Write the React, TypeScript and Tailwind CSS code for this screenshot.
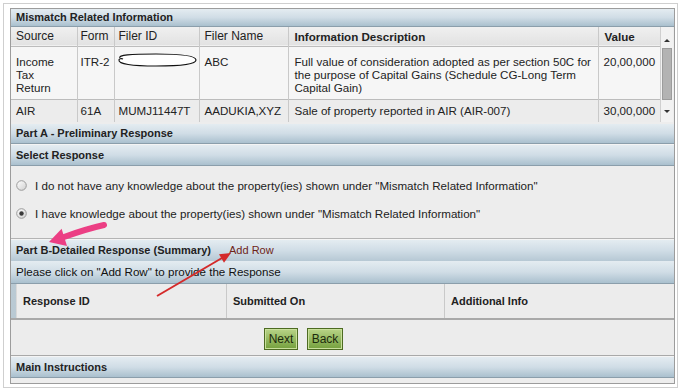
import React from "react";

const band =
  "bg-gradient-to-b from-[#e4ecf1] via-[#d0dde6] to-[#aac0ce] border-b border-[#8b9eab]";

const Radio = ({ checked }: { checked?: boolean }) => (
  <svg width="11" height="11" viewBox="0 0 11 11" className="shrink-0">
    <defs>
      <linearGradient id={checked ? "rg1" : "rg0"} x1="0" y1="0" x2="1" y2="1">
        <stop offset="0" stopColor="#ffffff" />
        <stop offset="1" stopColor="#cfcfcf" />
      </linearGradient>
    </defs>
    <circle cx="5.5" cy="5.5" r="4.8" fill={`url(#${checked ? "rg1" : "rg0"})`} stroke="#9a9a9a" strokeWidth="1" />
    {checked && <circle cx="5.5" cy="5.5" r="2.2" fill="#3a3a3a" />}
  </svg>
);

const Btn = ({ label, w }: { label: string; w: string }) => (
  <button
    className={`${w} h-[22px] border border-[#4d6b22] bg-gradient-to-b from-[#b9d487] to-[#74a03c] text-[12px] text-[#1c2a0c] leading-none shadow-[inset_0_0_0_1px_#c9e09c]`}
  >
    {label}
  </button>
);

export default function App() {
  return (
    <div className="relative w-[681px] h-[391px] bg-white p-[3px] font-['Liberation_Sans',Arial,sans-serif] text-[#222]">
      <div className="h-full border border-[#cfcfcf] pl-[6px] pr-[2px] pt-[4px] pb-[3px]">
        <div className="h-full border border-[#9c9c9c] bg-[#ededed] flex flex-col">
          {/* Mismatch header */}
          <div className={`h-[18px] shrink-0 flex items-center pl-[5px] text-[11px] font-bold ${band}`}>
            Mismatch Related Information
          </div>

          {/* Mismatch table */}
          <div className="h-[95px] shrink-0 flex">
            <table className="table-fixed w-[649px] border-collapse text-[11.6px] leading-[13px]">
              <colgroup>
                <col className="w-[66px]" />
                <col className="w-[37px]" />
                <col className="w-[85px]" />
                <col className="w-[89px]" />
                <col className="w-[310px]" />
                <col className="w-[62px]" />
              </colgroup>
              <thead>
                <tr className="h-[19px] bg-gradient-to-b from-[#f0f0f0] to-[#e2e2e2] border-b border-[#bcbcbc] text-left text-[12px]">
                  <th className="font-normal px-[5px] border-r border-[#c9c9c9]">Source</th>
                  <th className="font-normal px-[3px] border-r border-[#c9c9c9]">Form</th>
                  <th className="font-normal px-[4px] border-r border-[#c9c9c9]">Filer ID</th>
                  <th className="font-normal px-[5px] border-r border-[#c9c9c9]">Filer Name</th>
                  <th className="font-bold text-[11.6px] px-[6px] border-r border-[#c9c9c9]">Information Description</th>
                  <th className="font-bold text-[11.6px] px-[6px]">Value</th>
                </tr>
              </thead>
              <tbody>
                <tr className="h-[53px] bg-[#f6f6f6] border-b border-[#bcbcbc] align-top">
                  <td className="px-[5px] pt-[8px] border-r border-[#c9c9c9]">Income Tax Return</td>
                  <td className="px-[3px] pt-[8px] border-r border-[#c9c9c9]">ITR-2</td>
                  <td className="pl-[1px] pt-[6px] border-r border-[#c9c9c9]">
                    <svg width="82" height="14" viewBox="0 0 82 14" className="block">
                      <path
                        d="M4 5 C 2 2, 14 1, 40 1 C 66 1, 80 3, 80 7 C 80 11, 66 13, 40 13 C 16 13, 2 11, 3 7 C 3 6, 5 5, 7 6"
                        fill="#ffffff"
                        stroke="#111"
                        strokeWidth="1.2"
                      />
                    </svg>
                  </td>
                  <td className="px-[5px] pt-[8px] border-r border-[#c9c9c9]">ABC</td>
                  <td className="pl-[6px] pr-[2px] pt-[8px] border-r border-[#c9c9c9]">
                    Full value of consideration adopted as per section 50C for the purpose of Capital Gains (Schedule CG-Long Term Capital Gain)
                  </td>
                  <td className="px-[5px] pt-[8px]">20,00,000</td>
                </tr>
                <tr className="h-[23px] bg-[#ececec]">
                  <td className="px-[5px] border-r border-[#c9c9c9]">AIR</td>
                  <td className="px-[3px] border-r border-[#c9c9c9]">61A</td>
                  <td className="px-[4px] border-r border-[#c9c9c9]">MUMJ11447T</td>
                  <td className="px-[5px] border-r border-[#c9c9c9]">AADUKIA,XYZ</td>
                  <td className="px-[6px] border-r border-[#c9c9c9]">Sale of property reported in AIR (AIR-007)</td>
                  <td className="px-[5px]">30,00,000</td>
                </tr>
              </tbody>
            </table>
            {/* scrollbar */}
            <div className="w-[13px] border-l border-[#cfcfcf] bg-[#f2f2f2] flex flex-col items-center">
              <div className="h-[21px] flex items-end justify-center pb-[6px]">
                <div className="w-0 h-0 border-l-[3px] border-r-[3px] border-b-[3px] border-l-transparent border-r-transparent border-b-[#333]" />
              </div>
              <div className="w-[10px] h-[52px] bg-[#b3b3b3] border border-[#9c9c9c]" />
              <div className="flex-1 flex items-center justify-center">
                <div className="w-0 h-0 border-l-[3px] border-r-[3px] border-t-[3px] border-l-transparent border-r-transparent border-t-[#333]" />
              </div>
            </div>
          </div>

          <div className="h-[2px] shrink-0" />

          {/* Part A */}
          <div className={`h-[20px] shrink-0 flex items-center pl-[5px] text-[11px] font-bold ${band}`}>
            Part A - Preliminary Response
          </div>
          <div className="h-[1px] shrink-0 bg-[#f4f4f4]" />
          <div className={`h-[21px] shrink-0 flex items-center pl-[5px] text-[11px] font-bold ${band}`}>
            Select Response
          </div>

          {/* Radios */}
          <div className="h-[72px] shrink-0 flex flex-col pl-[5px] pt-[13px] gap-[15px] text-[11.6px] leading-[13px]">
            <label className="flex items-center gap-[8px]">
              <Radio />
              <span>I do not have any knowledge about the property(ies) shown under "Mismatch Related Information"</span>
            </label>
            <label className="flex items-center gap-[8px]">
              <Radio checked />
              <span>I have knowledge about the property(ies) shown under "Mismatch Related Information"</span>
            </label>
          </div>

          <div className="h-[2px] shrink-0 border-t border-[#b4b4b4] bg-[#f4f4f4]" />

          {/* Part B */}
          <div className="h-[21px] shrink-0 flex items-center pl-[5px] bg-gradient-to-b from-[#e4ecf1] via-[#d0dde6] to-[#b6c8d4]">
            <span className="text-[11px] font-bold">Part B-Detailed Response (Summary)</span>
            <span className="ml-[18px] text-[11px] text-[#6e2418]">Add Row</span>
          </div>
          <div className={`h-[23px] shrink-0 flex items-center pl-[5px] text-[11.6px] text-[#111] ${band}`}>
            Please click on "Add Row" to provide the Response
          </div>

          {/* Response table */}
          <div className="h-[36px] shrink-0 flex bg-gradient-to-r from-[#b9c9d3] to-[#ececec] border-b-2 border-[#a9a9a9]">
            <div className="ml-[5px] flex-1 flex bg-[#ececec] border-l border-[#d9d9d9] text-[11px] font-bold">
              <div className="w-[210px] flex items-center pl-[6px] border-r border-[#c9c9c9]">Response ID</div>
              <div className="w-[218px] flex items-center pl-[6px] border-r border-[#c9c9c9]">Submitted On</div>
              <div className="flex-1 flex items-center pl-[6px]">Additional Info</div>
            </div>
          </div>

          {/* Buttons */}
          <div className="h-[35px] shrink-0 flex items-start pt-[8px] pl-[253px] gap-[9px] bg-[#ececec]">
            <Btn label="Next" w="w-[34px]" />
            <Btn label="Back" w="w-[36px]" />
          </div>

          <div className="h-[2px] shrink-0 border-t border-[#a9a9a9] bg-[#f4f4f4]" />

          {/* Main Instructions */}
          <div className={`h-[21px] shrink-0 flex items-center pl-[5px] text-[11px] font-bold ${band}`}>
            Main Instructions
          </div>
          <div className="flex-1 bg-[#ededed]" />
        </div>
      </div>

      {/* annotation arrows */}
      <svg className="absolute inset-0 pointer-events-none" width="681" height="391" viewBox="0 0 681 391">
        <path d="M104 225 Q 86 229 64 237" stroke="#ec3f84" strokeWidth="6" strokeLinecap="round" fill="none" />
        <polygon points="49,242 67,246 61.6,228.7" fill="#ec3f84" />
        <line x1="157" y1="296" x2="222" y2="258" stroke="#d42a2a" strokeWidth="2" />
        <polygon points="231,253 224,262.8 219,254.2" fill="#d42a2a" />
      </svg>
    </div>
  );
}
